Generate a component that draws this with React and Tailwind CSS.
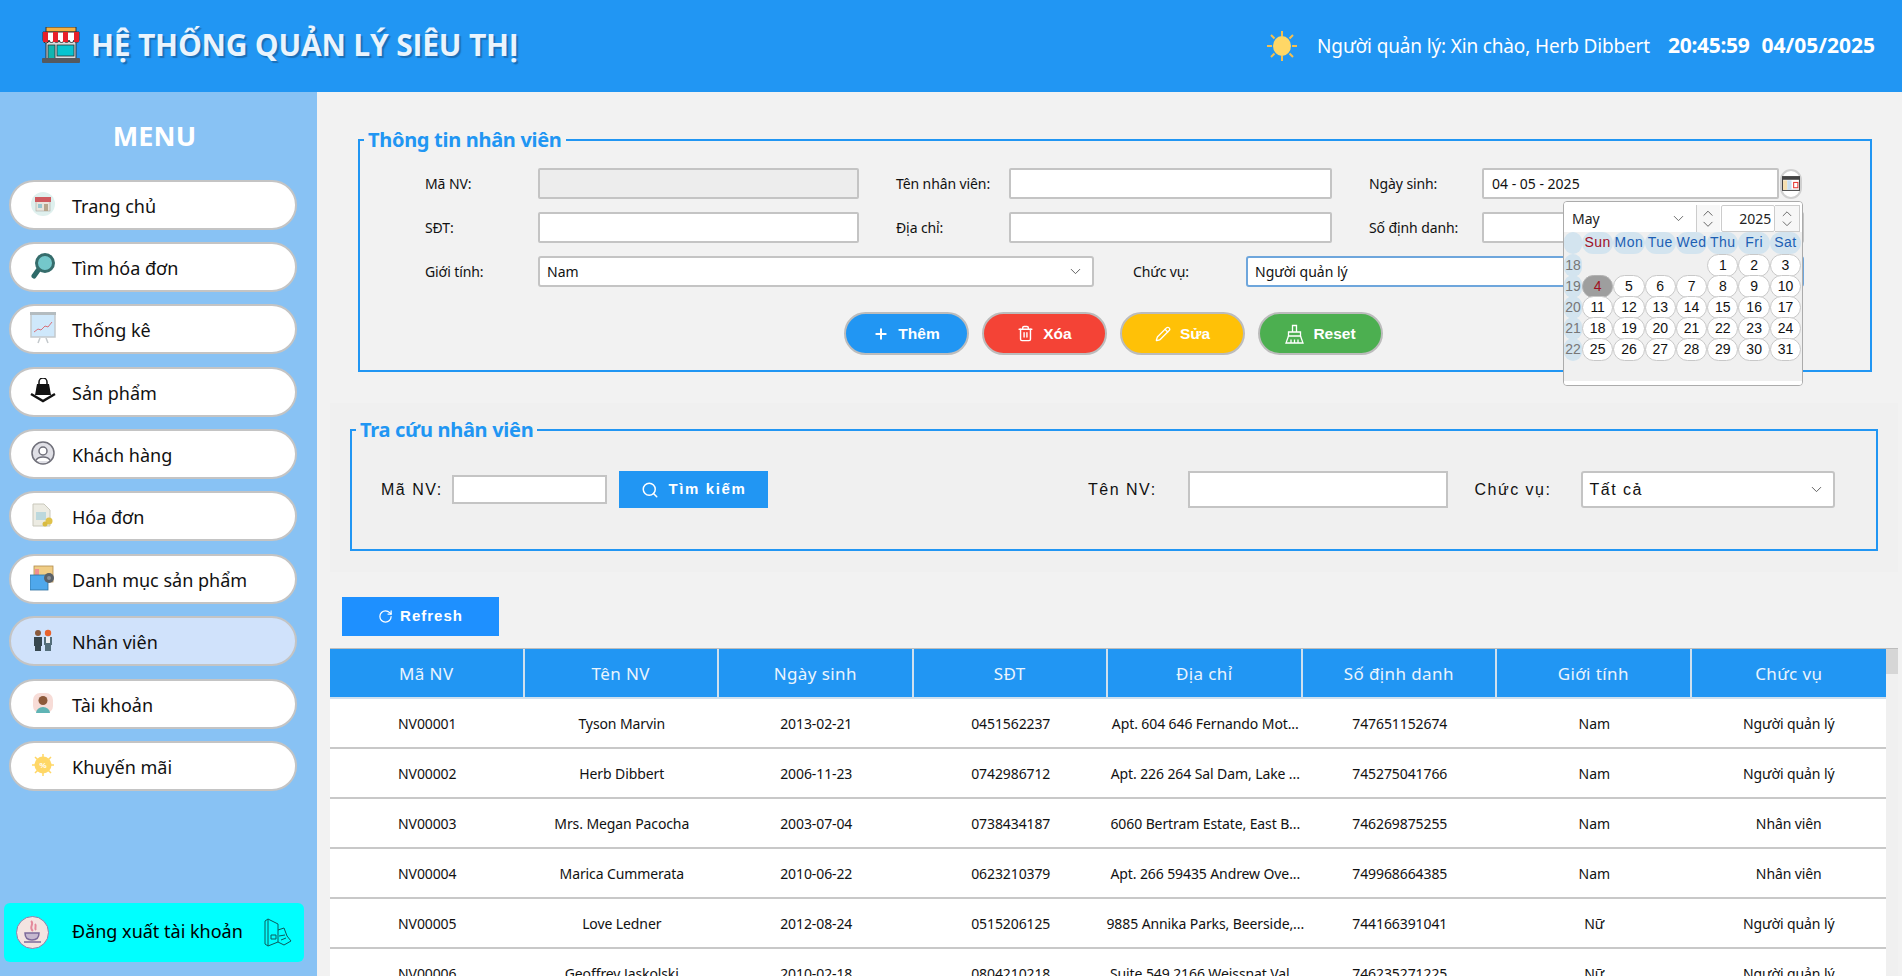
import { ChevronDown, ChevronUp, Plus, Trash2, Pencil, Search, RotateCw } from 'lucide-react';

const menuItems = [
  { label: 'Trang chủ', icon: <HomeIcon /> },
  { label: 'Tìm hóa đơn', icon: <MagnifierIcon /> },
  { label: 'Thống kê', icon: <ChartIcon /> },
  { label: 'Sản phẩm', icon: <BagIcon /> },
  { label: 'Khách hàng', icon: <UserIcon /> },
  { label: 'Hóa đơn', icon: <InvoiceIcon /> },
  { label: 'Danh mục sản phẩm', icon: <FolderIcon /> },
  { label: 'Nhân viên', icon: <StaffIcon />, active: true },
  { label: 'Tài khoản', icon: <AccountIcon /> },
  { label: 'Khuyến mãi', icon: <PromoIcon /> },
];

const columns = ['Mã NV', 'Tên NV', 'Ngày sinh', 'SĐT', 'Địa chỉ', 'Số định danh', 'Giới tính', 'Chức vụ'];

const employees = [
  ['NV00001', 'Tyson Marvin', '2013-02-21', '0451562237', 'Apt. 604 646 Fernando Mot...', '747651152674', 'Nam', 'Người quản lý'],
  ['NV00002', 'Herb Dibbert', '2006-11-23', '0742986712', 'Apt. 226 264 Sal Dam, Lake ...', '745275041766', 'Nam', 'Người quản lý'],
  ['NV00003', 'Mrs. Megan Pacocha', '2003-07-04', '0738434187', '6060 Bertram Estate, East B...', '746269875255', 'Nam', 'Nhân viên'],
  ['NV00004', 'Marica Cummerata', '2010-06-22', '0623210379', 'Apt. 266 59435 Andrew Ove...', '749968664385', 'Nam', 'Nhân viên'],
  ['NV00005', 'Love Ledner', '2012-08-24', '0515206125', '9885 Annika Parks, Beerside,...', '744166391041', 'Nữ', 'Người quản lý'],
  ['NV00006', 'Geoffrey Jaskolski', '2010-02-18', '0804210218', 'Suite 549 2166 Weissnat Val...', '746235271225', 'Nữ', 'Người quản lý'],
];

const weekDays = ['Sun', 'Mon', 'Tue', 'Wed', 'Thu', 'Fri', 'Sat'];

const calendarWeeks = [
  { week: 18, days: [null, null, null, null, 1, 2, 3] },
  { week: 19, days: [4, 5, 6, 7, 8, 9, 10] },
  { week: 20, days: [11, 12, 13, 14, 15, 16, 17] },
  { week: 21, days: [18, 19, 20, 21, 22, 23, 24] },
  { week: 22, days: [25, 26, 27, 28, 29, 30, 31] },
];

function StoreIcon() {
  return (
    <svg width="38" height="36" viewBox="0 0 38 36">
      <rect x="4" y="0" width="30" height="5" fill="#f5b041" stroke="#333" strokeWidth="1" />
      <rect x="4" y="14" width="30" height="18" fill="#d8dde0" stroke="#333" strokeWidth="1" />
      <path d="M1 5h36v8a2.500 2.500 0 0 1-5 0 2.500 2.500 0 0 1-5 0 2.500 2.500 0 0 1-5 0 2.500 2.500 0 0 1-5 0 2.500 2.500 0 0 1-5 0 2.500 2.500 0 0 1-5 0 2.500 2.500 0 0 1-6 0z" fill="#fff" stroke="#333" strokeWidth="1" />
      <path d="M1 5h5v10H1zM11 5h5v10h-5zM21 5h5v10h-5zM32 5h5v10h-5z" fill="#e8202a" />
      <rect x="6" y="18" width="7" height="14" fill="#12b5b0" stroke="#333" strokeWidth="0.8" />
      <rect x="15" y="18" width="17" height="11" fill="#06c4d0" stroke="#333" strokeWidth="0.8" />
      <rect x="0" y="31" width="38" height="5" rx="1" fill="#55595e" />
    </svg>
  );
}

function SunIcon() {
  return (
    <svg width="30" height="30" viewBox="0 0 30 30">
      <path d="M15 0v5M15 25v5M0 15h5M25 15h5M4 4l3.500 3.500M26 4l-3.500 3.500M4 26l3.500-3.500M26 26l-3.500-3.500" stroke="#f5c04f" strokeWidth="2" />
      <ellipse cx="15" cy="15" rx="9" ry="10" fill="#ffd766" />
    </svg>
  );
}

function HomeIcon() {
  return (
    <svg width="24" height="26" viewBox="0 0 24 26">
      <circle cx="12" cy="13" r="12" fill="#dff0ee" />
      <rect x="5" y="9" width="14" height="11" fill="#e9e4dc" stroke="#a9a9a0" strokeWidth="0.6" />
      <rect x="4" y="6" width="16" height="5" fill="#cf5a5f" />
      <rect x="7" y="13" width="4" height="4" fill="#9ac7cf" />
      <rect x="13" y="13" width="4" height="7" fill="#b7a58c" />
    </svg>
  );
}

function MagnifierIcon() {
  return (
    <svg width="24" height="28" viewBox="0 0 24 28">
      <path d="M8 17L3 24" stroke="#2e6b69" strokeWidth="5" strokeLinecap="round" />
      <circle cx="14" cy="11" r="8.500" fill="#74c8cb" stroke="#366d6c" strokeWidth="3" />
    </svg>
  );
}

function ChartIcon() {
  return (
    <svg width="26" height="32" viewBox="0 0 26 32">
      <rect x="1" y="1" width="24" height="24" fill="#cfe8fb" stroke="#c4c9cc" strokeWidth="1.500" />
      <rect x="0" y="0" width="26" height="3" fill="#b4bcc0" />
      <path d="M4 20l4-3 3 1 4-4 3 1 4-5" fill="none" stroke="#d8707a" strokeWidth="1" />
      <path d="M10 26l-2 5M16 26l2 5" stroke="#c4c9cc" strokeWidth="1.500" />
    </svg>
  );
}

function BagIcon() {
  return (
    <svg width="26" height="26" viewBox="0 0 26 26">
      <path d="M9 7V4a4 4 0 0 1 8 0v3" fill="none" stroke="#111" strokeWidth="1.500" />
      <path d="M7 6h12l2 11H5z" fill="#111" />
      <path d="M1 16l12 7 12-7" fill="none" stroke="#111" strokeWidth="2.500" />
    </svg>
  );
}

function UserIcon() {
  return (
    <svg width="24" height="24" viewBox="0 0 24 24" fill="none" stroke="#70707a" strokeWidth="1.500">
      <circle cx="12" cy="12" r="11" fill="#e0e0e6" />
      <circle cx="12" cy="10" r="4" fill="#fff" />
      <path d="M4.500 20a8 6 0 0 1 15 0" fill="#fff" />
    </svg>
  );
}

function InvoiceIcon() {
  return (
    <svg width="22" height="24" viewBox="0 0 22 24">
      <path d="M1 1h11l6 6v16H1z" fill="#ecebe2" stroke="#c9c8bb" strokeWidth="1" />
      <rect x="4" y="9" width="10" height="8" fill="#bcd8dd" />
      <circle cx="17" cy="18" r="3.500" fill="#e0c24a" />
      <circle cx="13" cy="21" r="2.500" fill="#d8bb42" />
    </svg>
  );
}

function FolderIcon() {
  return (
    <svg width="26" height="26" viewBox="0 0 26 26">
      <rect x="4" y="1" width="19" height="16" fill="#f0cd86" stroke="#b08a4c" strokeWidth="0.800" />
      <rect x="5" y="4" width="4" height="8" fill="#f08f8f" />
      <rect x="0" y="10" width="18" height="15" fill="#4fa8ec" stroke="#2e6f9f" strokeWidth="0.800" />
      <circle cx="19" cy="13" r="5" fill="#5b6168" />
      <circle cx="19" cy="13" r="2" fill="#8a9199" />
    </svg>
  );
}

function StaffIcon() {
  return (
    <svg width="20" height="22" viewBox="0 0 20 22">
      <circle cx="5" cy="4" r="3" fill="#8a5a3c" />
      <path d="M1 8h8v9H8v5H2v-5H1z" fill="#37474f" />
      <circle cx="15" cy="4" r="3.200" fill="#e8632c" />
      <path d="M11 8h8v8h-1v6h-6v-6h-1z" fill="#546e7a" />
      <rect x="13" y="8" width="4" height="6" fill="#eceff1" />
    </svg>
  );
}

function AccountIcon() {
  return (
    <svg width="20" height="20" viewBox="0 0 20 20">
      <rect width="20" height="20" rx="7" fill="#f7dcd7" />
      <circle cx="10" cy="7.500" r="4.500" fill="#8d5a3a" />
      <path d="M3 20a7 6 0 0 1 14 0z" fill="#5fb4b5" />
    </svg>
  );
}

function PromoIcon() {
  return (
    <svg width="22" height="22" viewBox="0 0 22 22">
      <path d="M11 0v22M0 11h22M3 3l16 16M19 3L3 19" stroke="#ffd766" strokeWidth="1.500" />
      <circle cx="11" cy="11" r="8.500" fill="#ffd766" />
      <text x="11" y="14" textAnchor="middle" fontSize="8" fontWeight="700" fill="#fff" fontFamily="'Liberation Sans', sans-serif">%</text>
    </svg>
  );
}

function CoffeeIcon() {
  return (
    <svg width="33" height="33" viewBox="0 0 33 33">
      <circle cx="16.500" cy="16.500" r="16" fill="#f3e4e1" stroke="#8f7fa9" strokeWidth="1" />
      <path d="M15 5c4 3-3 6 2 10M19 8c2 2-1 4 1 6" fill="none" stroke="#e4899b" strokeWidth="2" />
      <path d="M9 17h14c0 5-3 7-7 7s-7-2-7-7z" fill="#c6b8cf" stroke="#7c6a9a" strokeWidth="1.500" />
      <path d="M8 26h17" stroke="#7c6a9a" strokeWidth="1.500" />
    </svg>
  );
}

function LogoutIcon() {
  return (
    <svg width="28" height="29" viewBox="0 0 28 29" fill="none" stroke="#0c5a5c" strokeWidth="1">
      <path d="M1 3l3-2 10 5v18l-10 4-3-2z" />
      <path d="M4 1v27M14 12l6-2 3 8 4 5-7 4-6-3" />
      <path d="M7 17h5v4H7zM15 18l6-1M17 22l5-2" />
    </svg>
  );
}

function CalendarIcon() {
  return (
    <svg width="18" height="15" viewBox="0 0 17 14">
      <rect x="0.500" y="0.500" width="16" height="13" fill="#fff" stroke="#444" />
      <rect x="0.500" y="0.500" width="16" height="3" fill="#444" />
      <rect x="1" y="4" width="4" height="9" fill="#f5dfb0" />
      <rect x="5" y="4" width="4" height="9" fill="#c8dff0" />
      <rect x="11" y="6" width="4" height="5" fill="none" stroke="#e53935" />
    </svg>
  );
}

function BroomIcon() {
  return (
    <svg width="19" height="20" viewBox="0 0 19 20" fill="none" stroke="#fff" strokeWidth="1.300">
      <path d="M7.500 8V1.500h4V8" />
      <path d="M3.500 8h12v4h-12z" />
      <path d="M3.500 12L1 19h17l-2.500-7M6 15.500V19M9.500 15.500V19M13 15.500V19" />
    </svg>
  );
}

function Spinner() {
  return (
    <div className="flex flex-col items-center justify-center text-[#555]">
      <ChevronUp size={18} strokeWidth={1.3} className="-mb-[6px]" />
      <ChevronDown size={18} strokeWidth={1.3} />
    </div>
  );
}

function FieldLabel({ children, className = '' }) {
  return <label className={`w-[113px] shrink-0 text-[14px] tracking-[-0.1px] text-[#111] ${className}`}>{children}</label>;
}

function TextBox({ className = '', value, disabled }) {
  return (
    <div className={`h-[31px] shrink-0 border-2 border-[#c4c4c4] rounded-[2px] px-[8px] flex items-center text-[14px] text-[#111] ${disabled ? 'bg-[#ededed]' : 'bg-white'} ${className}`}>
      {value}
    </div>
  );
}

function SelectBox({ value, className = '' }) {
  return (
    <div className={`h-[31px] shrink-0 border-2 rounded-[3px] bg-white pl-[7px] pr-[8px] flex items-center justify-between text-[14px] text-[#111] ${className}`}>
      <span>{value}</span>
      <ChevronDown size={17} strokeWidth={1.3} className="text-[#555]" />
    </div>
  );
}

function ActionButton({ color, icon, label }) {
  return (
    <button className={`w-[125px] h-[43px] rounded-[22px] border-2 border-[#bcbcbc] flex items-center justify-center gap-[9px] text-white text-[15.500px] font-bold font-['Liberation_Sans',sans-serif] ${color}`}>
      {icon}
      {label}
    </button>
  );
}

function DatePopup() {
  return (
    <div className="absolute left-[1563px] top-[201px] w-[240px] h-[185px] bg-[#f0f0f0] border border-[#ababab] rounded-[4px] font-['Liberation_Sans',sans-serif] text-[14px] overflow-hidden">
      <div className="flex h-[30px] pt-[3px] pr-[2px] bg-white">
        <div className="w-[133px] flex items-center justify-between pl-[8px] pr-[9px] font-['Noto_Sans',sans-serif] text-[#222]">
          May
          <ChevronDown size={17} strokeWidth={1.2} className="text-[#555]" />
        </div>
        <div className="w-[24px] border-l border-[#ccc] bg-[#f7f7f7] flex justify-center">
          <Spinner />
        </div>
        <div className="w-[55px] border border-[#ccc] rounded-[2px] ml-[1px] bg-white flex items-center justify-end pr-[3px] text-[#222] font-['Noto_Sans',sans-serif]">2025</div>
        <div className="w-[25px] border border-l-0 border-[#ccc] bg-[#f7f7f7] flex justify-center">
          <Spinner />
        </div>
      </div>
      <div className="grid grid-cols-[18px_repeat(7,31.300px)] h-[21.500px]">
        <div className="bg-[#d3e4ef] rounded-full" />
        {weekDays.map(d => (
          <div key={d} className={`bg-[#d3e4ef] rounded-full flex items-center justify-center text-[14px] tracking-[0.5px] ${d === 'Sun' ? 'text-[#a01028]' : 'text-[#1c5fb4]'}`}>
            {d}
          </div>
        ))}
      </div>
      {calendarWeeks.map(row => (
        <div key={row.week} className="grid grid-cols-[18px_repeat(7,31.300px)] h-[21.200px]">
          <div className="bg-[#d3e4ef] rounded-full flex items-center justify-center text-[#777]">{row.week}</div>
          {row.days.map((day, i) => (
            day === null ? <div key={i} /> : (
              <div
                key={i}
                className={`rounded-full border-[1.500px] flex items-center justify-center ${day === 4 ? 'bg-[#9e9e9e] border-[#b2b2b2] text-[#a01020]' : 'bg-white border-[#c8c8c8] text-[#111]'}`}
              >
                {day}
              </div>
            )
          ))}
        </div>
      ))}
      <div className="absolute bottom-0 left-0 right-0 h-[4px] bg-white" />
    </div>
  );
}

export default function App() {
  return (
    <div className="relative w-[1902px] h-[976px] overflow-hidden bg-[#f2f2f2] font-['Noto_Sans',sans-serif] flex flex-col">
      <header className="h-[92px] bg-[#2196f3] flex items-center pl-[42px] pr-[27px] shrink-0">
        <span className="-mt-[3px]"><StoreIcon /></span>
        <h1 className="ml-[11px] -mt-[3px] text-[30px] font-bold text-[#eaf4fd] tracking-[-0.2px] [text-shadow:2px_2px_1px_#1a6fb8] font-['Open_Sans',sans-serif]">HỆ THỐNG QUẢN LÝ SIÊU THỊ</h1>
        <div className="ml-auto flex items-center text-white">
          <SunIcon />
          <span className="ml-[20px] text-[19px] tracking-[-0.15px]">Người quản lý: Xin chào, Herb Dibbert</span>
          <span className="ml-[18px] text-[21px] font-bold tracking-[-0.3px]">20:45:59</span>
          <span className="ml-[12px] text-[21px] font-bold">04/05/2025</span>
        </div>
      </header>

      <div className="flex flex-1 min-h-0">
        <aside className="w-[317px] shrink-0 bg-[#88c2f4] flex flex-col px-[9px]">
          <div className="mt-[27px] h-[34px] text-center text-[27px] tracking-[0.2px] font-bold text-white leading-[34px] pr-[8px]">MENU</div>
          <nav className="mt-[26.500px] flex flex-col gap-[12.400px]">
            {menuItems.map(item => (
              <div
                key={item.label}
                className={`w-[288px] h-[50px] rounded-[25px] border-2 border-[#c4c4c4] flex items-center text-[18px] text-[#111] ${item.active ? 'bg-[#d0e2fb]' : 'bg-white'}`}
              >
                <span className="w-[61px] flex justify-center pl-[2px] -mt-[2px]">{item.icon}</span>
                <span className="pt-[3px]">{item.label}</span>
              </div>
            ))}
          </nav>
          <div className="mt-auto mb-[14px] -ml-[5px] w-[300px] h-[59px] rounded-[6px] bg-[#00ffff] flex items-center pl-[12px] text-[18px] text-black">
            <CoffeeIcon />
            <span className="ml-[23px] -mt-[2px]">Đăng xuất tài khoản</span>
            <span className="ml-auto mr-[12px]"><LogoutIcon /></span>
          </div>
        </aside>

        <main className="flex-1 min-w-0 flex flex-col">
          <div className="pl-[41px] pr-[30px] pt-[34px]">
            <fieldset className="border-[2.500px] border-[#2196f3] h-[246px] pl-[4px]">
              <legend className="px-[4px] text-[20px] font-bold leading-[27px] text-[#2196f3] tracking-[-0.3px]">Thông tin nhân viên</legend>
              <div className="flex flex-col gap-[13px] mt-[15px] pl-[61px]">
                <div className="flex items-center">
                  <FieldLabel>Mã NV:</FieldLabel>
                  <TextBox disabled className="w-[321px]" />
                  <FieldLabel className="ml-[37px]">Tên nhân viên:</FieldLabel>
                  <TextBox className="w-[323px]" />
                  <FieldLabel className="ml-[37px]">Ngày sinh:</FieldLabel>
                  <TextBox value="04 - 05 - 2025" className="w-[297px]" />
                  <div className="w-[22px] h-[30px] ml-[1px] rounded-full border-2 border-[#d0d0d0] bg-white flex items-center justify-center">
                    <CalendarIcon />
                  </div>
                </div>
                <div className="flex items-center">
                  <FieldLabel>SĐT:</FieldLabel>
                  <TextBox className="w-[321px]" />
                  <FieldLabel className="ml-[37px]">Địa chỉ:</FieldLabel>
                  <TextBox className="w-[323px]" />
                  <FieldLabel className="ml-[37px]">Số định danh:</FieldLabel>
                  <TextBox className="w-[322px]" />
                </div>
                <div className="flex items-center">
                  <FieldLabel>Giới tính:</FieldLabel>
                  <SelectBox value="Nam" className="w-[556px] border-[#c4c4c4]" />
                  <FieldLabel className="ml-[39px]">Chức vụ:</FieldLabel>
                  <SelectBox value="Người quản lý" className="w-[558px] border-[#6ea6dc]" />
                </div>
              </div>
              <div className="flex justify-center gap-[13px] mt-[25px] pr-[7px]">
                <ActionButton color="bg-[#2196f3]" icon={<Plus size={16} strokeWidth={3} />} label="Thêm" />
                <ActionButton color="bg-[#f44336]" icon={<Trash2 size={17} strokeWidth={2} />} label="Xóa" />
                <ActionButton color="bg-[#ffc107]" icon={<Pencil size={16} strokeWidth={2} />} label="Sửa" />
                <ActionButton color="bg-[#4caf50]" icon={<BroomIcon />} label="Reset" />
              </div>
            </fieldset>
          </div>

          <div className="ml-[13px] mt-[31px] w-[1568px] h-[169px] bg-[#f0f0f0] px-[20px] pt-[13px]">
            <fieldset className="border-[2.500px] border-[#2196f3] h-[135px] pl-[4px]">
              <legend className="px-[4px] text-[20px] font-bold leading-[27px] text-[#2196f3] tracking-[-0.3px]">Tra cứu nhân viên</legend>
              <div className="flex items-center mt-[28px] pl-[25px] font-['Liberation_Sans',sans-serif] text-[16px] tracking-[1.500px] text-[#111]">
                <label className="w-[71px] shrink-0">Mã NV:</label>
                <div className="w-[155px] h-[29px] shrink-0 border-2 border-[#c4c4c4] bg-white" />
                <button className="ml-[12px] w-[149px] h-[37px] shrink-0 bg-[#2196f3] text-white text-[15px] font-bold tracking-[1.600px] flex items-center justify-center gap-[10px]">
                  <Search size={18} strokeWidth={2} />
                  Tìm kiếm
                </button>
                <label className="ml-[320px] w-[99.500px] shrink-0">Tên NV:</label>
                <div className="w-[260px] h-[37px] shrink-0 border-2 border-[#c4c4c4] bg-white" />
                <label className="ml-[27px] w-[106px] shrink-0">Chức vụ:</label>
                <div className="w-[254px] h-[37px] shrink-0 border-2 border-[#c4c4c4] rounded-[3px] bg-white pl-[7px] pr-[8px] flex items-center justify-between">
                  <span>Tất cả</span>
                  <ChevronDown size={17} strokeWidth={1.3} className="text-[#555]" />
                </div>
              </div>
            </fieldset>
          </div>

          <button className="ml-[25px] mt-[25px] w-[157px] h-[39px] shrink-0 bg-[#1e90ff] text-white text-[15px] font-bold tracking-[1px] font-['Liberation_Sans',sans-serif] flex items-center justify-center gap-[7px]">
            <RotateCw size={15} strokeWidth={2} />
            Refresh
          </button>

          <div className="ml-[13px] mt-[12px] w-[1568px] flex border-t border-[#bdbdbd] flex-1 min-h-0 overflow-hidden">
            <div className="w-[1556px] shrink-0">
              <div className="grid grid-cols-8 h-[50px] bg-[#2196f3] border-b-2 border-[#cfe0ee]">
                {columns.map((col, i) => (
                  <div key={col} className={`flex items-center justify-center pt-[1px] text-[17px] tracking-[0.4px] text-[#eaf4fd] ${i < 7 ? 'border-r-2 border-[#cfe0ee]' : ''}`}>
                    {col}
                  </div>
                ))}
              </div>
              {employees.map(row => (
                <div key={row[0]} className="grid grid-cols-8 h-[50px] bg-white border-b-2 border-[#c8c8c8]">
                  {row.map((cell, i) => (
                    <div key={i} className="flex items-center justify-center text-[14px] tracking-[-0.1px] text-[#111] whitespace-nowrap">
                      {cell}
                    </div>
                  ))}
                </div>
              ))}
            </div>
            <div className="w-[12px] shrink-0 bg-[#f0f0f0]">
              <div className="h-[25px] bg-[#d6d6d6]" />
            </div>
          </div>
        </main>
      </div>
      <DatePopup />
    </div>
  );
}
